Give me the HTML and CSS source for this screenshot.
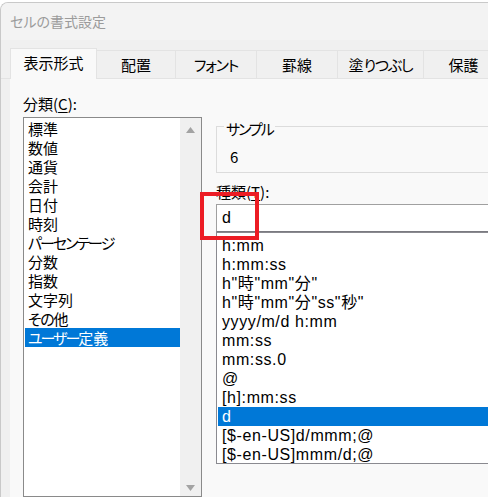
FILE: index.html
```html
<!DOCTYPE html>
<html lang="ja">
<head>
<meta charset="utf-8">
<title>セルの書式設定</title>
<link rel="stylesheet" href="styles.css">
</head>
<body>
<div class="window">
  <div class="titlebar">セルの書式設定</div>
  <div class="tabbar">
    <div class="tab tab-active tab-fmt">表示形式</div>
    <div class="tab tab-align">配置</div>
    <div class="tab tab-font"><span class="kana-s">フォント</span></div>
    <div class="tab tab-border">罫線</div>
    <div class="tab tab-fill">塗<span class="kana-s">りつぶし</span></div>
    <div class="tab tab-protect">保護</div>
  </div>
  <div class="page">
    <div class="left">
      <div class="label">分類(<u>C</u>):</div>
      <div class="listbox">
        <ul class="items">
          <li>標準</li>
          <li>数値</li>
          <li>通貨</li>
          <li>会計</li>
          <li>日付</li>
          <li>時刻</li>
          <li><span class="kana">パーセンテージ</span></li>
          <li>分数</li>
          <li>指数</li>
          <li>文字列</li>
          <li><span class="kana-s">その</span>他</li>
          <li class="selected"><span class="kana">ユーザー</span>定義</li>
        </ul>
        <div class="scrollbar">
          <svg class="arrow" width="9" height="6" viewBox="0 0 9 6"><polygon points="0,6 4.5,0 9,6" fill="#a3a3a3"/></svg>
          <svg class="arrow" width="9" height="6" viewBox="0 0 9 6"><polygon points="0,0 4.5,6 9,0" fill="#a3a3a3"/></svg>
        </div>
      </div>
    </div>
    <div class="right">
      <div class="group">
        <span class="legend"><span class="kana">サンプル</span></span>
        <div class="sample">6</div>
      </div>
      <div class="label type-label">種類(<u>T</u>):</div>
      <div class="input">d</div>
      <ul class="fmtlist">
        <li>h:mm</li>
        <li>h:mm:ss</li>
        <li>h"時"mm"分"</li>
        <li>h"時"mm"分"ss"秒"</li>
        <li>yyyy/m/d h:mm</li>
        <li>mm:ss</li>
        <li>mm:ss.0</li>
        <li>@</li>
        <li>[h]:mm:ss</li>
        <li class="selected">d</li>
        <li>[$-en-US]d/mmm;@</li>
        <li>[$-en-US]mmm/d;@</li>
      </ul>
    </div>
  </div>
  <div class="redbox"></div>
</div>
</body>
</html>
```

FILE: styles.css
```css
html, body {
  margin: 0;
  padding: 0;
  background: #ffffff;
}
body {
  width: 488px;
  height: 497px;
  overflow: hidden;
  font-family: "Noto Sans CJK JP", sans-serif;
  font-feature-settings: "palt";
  color: #000;
}
.kana {
  letter-spacing: -2px;
}
.kana-s {
  letter-spacing: -1.2px;
}
.window {
  position: relative;
  margin-top: 2px;
  height: 495px;
  box-sizing: border-box;
  border-top: 1px solid #c9c9c9;
  border-left: 1px solid #c9c9c9;
  border-top-left-radius: 8px;
  background: #f0f0f0;
  overflow: hidden;
  display: flex;
  flex-direction: column;
}
.titlebar {
  height: 37px;
  background: #f3f3f3;
  padding-left: 9px;
  font-size: 14px;
  line-height: 37px;
  color: #9b9b9b;
  box-sizing: border-box;
}
.tabbar {
  height: 40px;
  padding-left: 9px;
  display: flex;
  align-items: flex-end;
  box-sizing: border-box;
  border-bottom: 1px solid #e3e3e3;
}
.tab {
  height: 28px;
  box-sizing: border-box;
  display: flex;
  align-items: center;
  justify-content: center;
  font-size: 15px;
  border-top: 1px solid #e3e3e3;
  border-right: 1px solid #e3e3e3;
  background: #f0f0f0;
  flex-shrink: 0;
}
.tab-active {
  height: 31px;
  margin-bottom: -1px;
  background: #f9f9f9;
  border-left: 1px solid #e3e3e3;
  padding-bottom: 3px;
}
.tab-fmt { width: 87px; }
.tab-align { width: 79px; }
.tab-font { width: 81px; }
.tab-border { width: 81px; }
.tab-fill { width: 86px; }
.tab-protect { width: 80px; }

.page {
  flex: 1;
  margin-left: 9px;
  background: #f9f9f9;
  display: flex;
  gap: 14px;
  padding-left: 13px;
  padding-top: 15px;
}
.label {
  font-size: 15px;
  line-height: 19px;
  height: 19px;
}
.label u {
  text-underline-offset: 2px;
}
.left {
  display: flex;
  flex-direction: column;
  gap: 4px;
}
.listbox {
  width: 179px;
  height: 380px;
  box-sizing: border-box;
  border: 1px solid #8a8a8a;
  background: #ffffff;
  display: flex;
}
.items {
  list-style: none;
  margin: 0;
  padding: 1px 0 0 1px;
  flex: 1;
}
.items li, .fmtlist li {
  height: 19px;
  line-height: 19px;
  font-size: 15px;
  padding-left: 3px;
  white-space: nowrap;
}
li.selected {
  background: #0078d7;
  color: #ffffff;
}
.scrollbar {
  width: 21px;
  background: #f0f0f0;
  display: flex;
  flex-direction: column;
  justify-content: space-between;
  align-items: center;
  padding: 9px 0 5px 0;
  box-sizing: border-box;
}
.arrow {
  display: block;
}
.right {
  flex: 1;
  padding-top: 32px;
  display: flex;
  flex-direction: column;
  min-width: 0;
}
.group {
  position: relative;
  height: 47px;
  box-sizing: border-box;
  border: 1px solid #dcdcdc;
  border-right: none;
  padding: 20px 0 0 13px;
}
.legend {
  position: absolute;
  left: 7px;
  top: -8px;
  padding: 0 2px;
  background: #f9f9f9;
  font-size: 15px;
  line-height: 19px;
}
.sample {
  font-size: 15px;
  line-height: 19px;
}
.type-label {
  margin-top: 9px;
}
.input {
  margin-top: 3px;
  height: 28px;
  box-sizing: border-box;
  border: 1px solid #a0a0a0;
  border-right: none;
  border-bottom: 1px solid #7a7a80;
  background: #ffffff;
  font-family: "Liberation Sans", "Noto Sans CJK JP", sans-serif;
  font-size: 16px;
  line-height: 26px;
  padding-left: 5px;
}
.fmtlist {
  list-style: none;
  margin: 0;
  height: 232px;
  box-sizing: border-box;
  border: 1px solid #8a8a90;
  border-right: none;
  background: #ffffff;
  padding: 3px 0 0 1px;
  overflow: hidden;
  font-family: "Liberation Sans", "Noto Sans CJK JP", sans-serif;
}
.fmtlist li {
  padding-left: 4px;
  font-size: 16px;
  letter-spacing: 0.6px;
}
.redbox {
  position: absolute;
  left: 199px;
  top: 189px;
  width: 59px;
  height: 48px;
  box-sizing: border-box;
  border: 4px solid #ec1c24;
}
```
